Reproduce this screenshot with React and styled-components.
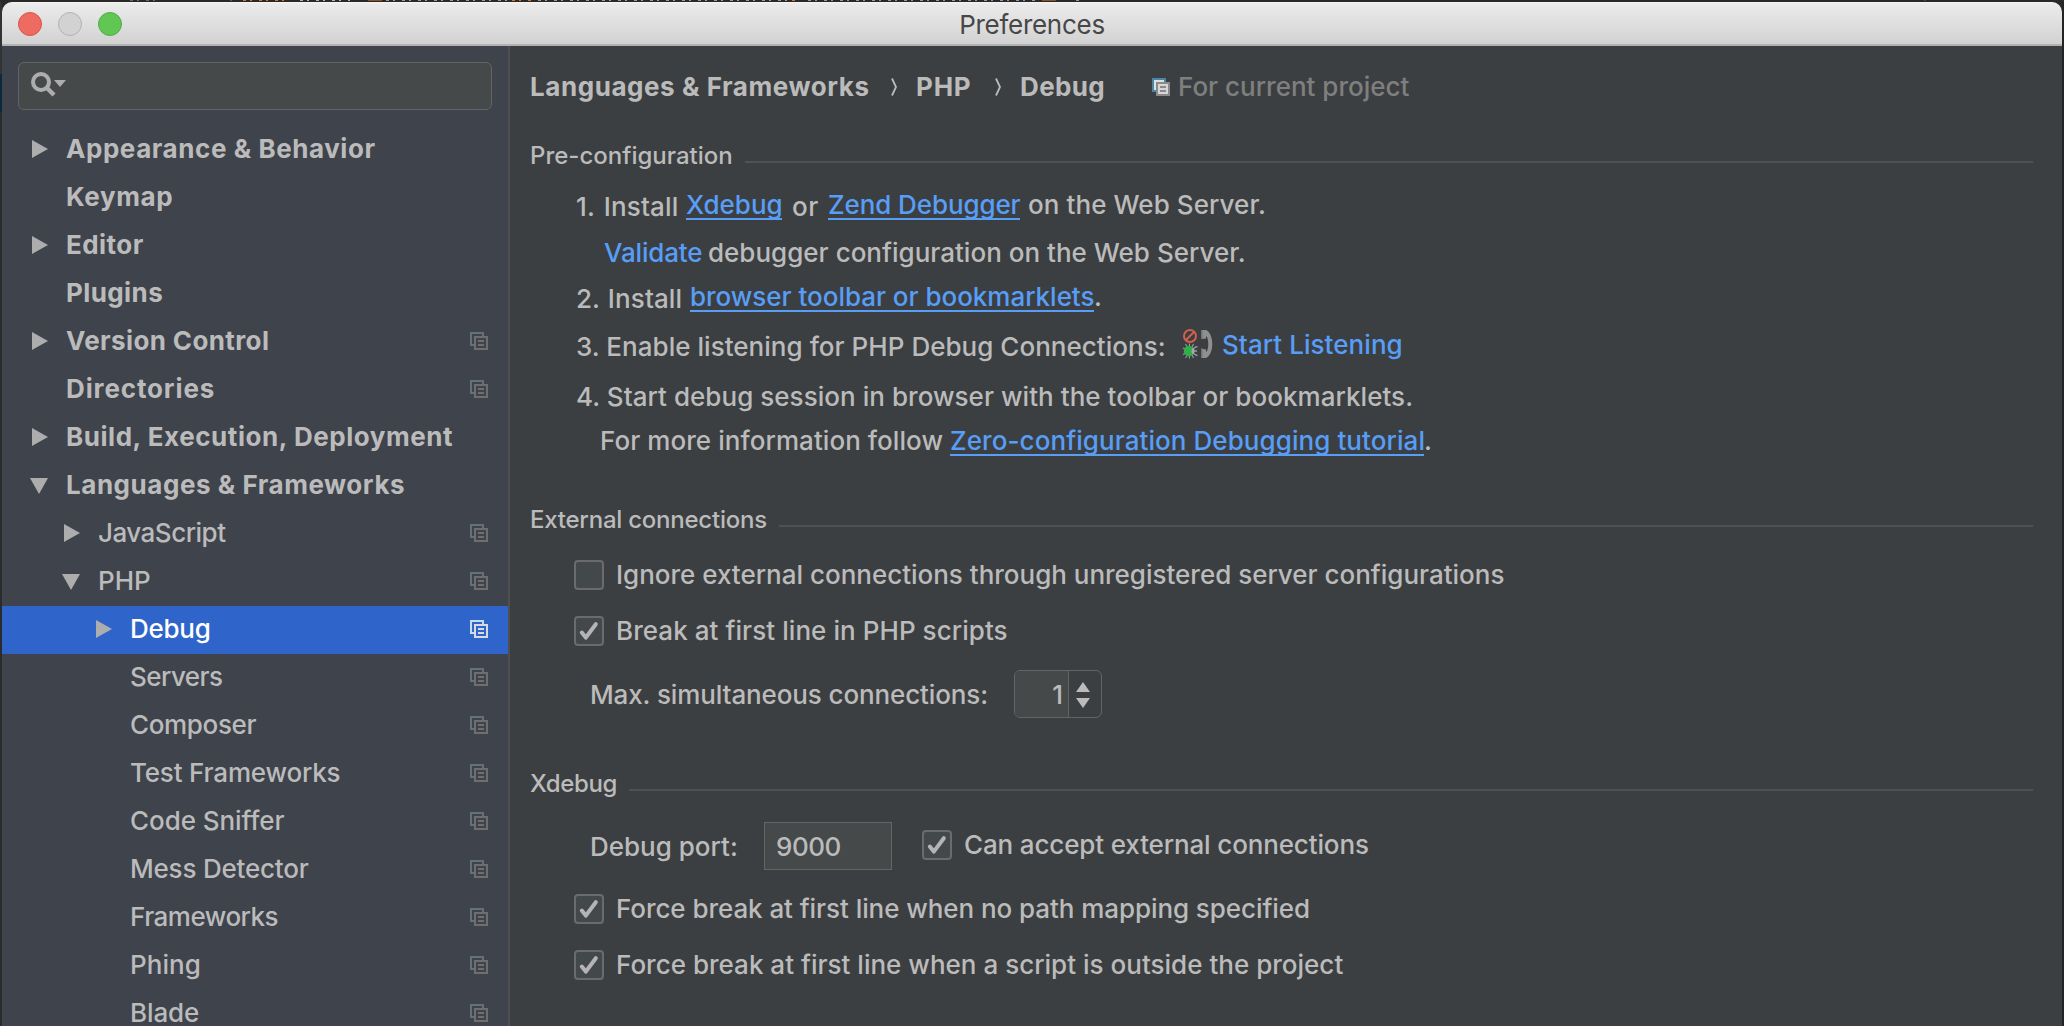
import React from "react";
import styled, { createGlobalStyle, css } from "styled-components";

const GlobalStyle = createGlobalStyle`
  html, body { margin: 0; padding: 0; background: #2b2b2b; overflow: hidden; }
  * { box-sizing: border-box; }
  body { font-family: Inter, "Liberation Sans", sans-serif; font-size: 26px; line-height: 30px; color: #bbbbbb; }
`;

const Desktop = styled.div`
  display: grid;
  grid-template-columns: 2px 2060px 2px;
  grid-template-rows: 2px 1024px;
  width: 2064px;
  height: 1026px;
  background: #282828;
`;

const EditorStrip = styled.div`
  grid-column: 1 / -1;
  display: flex;
  height: 2px;
  overflow: hidden;
  background: #2b2927;
`;

const CodeRun = styled.i`
  flex: none;
  height: 1px;
  width: ${(p) => p.$w}px;
  margin-left: ${(p) => p.$gap || 0}px;
  background: ${(p) =>
    p.$solid ? p.$c : `repeating-linear-gradient(90deg, ${p.$c} 0 3px, transparent 3px 7px, ${p.$c} 7px 9px, transparent 9px 16px)`};
`;

const EdgeLeft = styled.div`
  background: linear-gradient(#313335 0 72px, #0d293e 72px 110px, #2a2b2c 110px);
`;

const EdgeRight = styled.div`
  background: #242424;
`;

const Window = styled.div`
  display: grid;
  grid-template-rows: 44px 980px;
  grid-template-columns: 506px 2px 1552px;
  border-radius: 10px 10px 0 0;
  overflow: hidden;
`;

const TitleBar = styled.header`
  grid-column: 1 / -1;
  display: grid;
  grid-template-columns: 1fr auto 1fr;
  align-items: start;
  padding: 10px 16px 0;
  color: #474747;
  background: linear-gradient(#f6f6f6 0, #ebebeb 2px, #d2d2d2 42px, #b4b4b4 42px, #b0b0b0 44px);
`;

const Lights = styled.div`
  display: flex;
  gap: 16px;
`;

const Light = styled.span`
  width: 24px;
  height: 24px;
  border-radius: 50%;
  background: ${(p) => p.$fill};
  border: 1px solid ${(p) => p.$edge};
`;

const Text = styled.span`
  display: block;
  flex: none;
  white-space: pre;
  font-weight: ${(p) => (p.$bold ? 700 : 450)};
  letter-spacing: ${(p) => p.$ls ?? 0}px;
  ${(p) => p.$ws && css`word-spacing: ${p.$ws}px;`}
  ${(p) => p.$w && css`width: ${p.$w}px;`}
  ${(p) => p.$drop && css`margin-top: ${p.$drop}px;`}
  ${(p) => p.$gap && css`margin-left: ${p.$gap}px;`}
`;

const Title = styled(Text)`
  margin-top: -2px;
  font-weight: 400;
`;

const HintText = styled(Text)`
  color: #7f7f7f;
`;

const Sidebar = styled.aside`
  background: #3f434c;
  padding-top: 16px;
  overflow: hidden;
`;

const Divider = styled.div`
  background: #514f50;
`;

const SearchField = styled.div`
  display: flex;
  align-items: flex-start;
  height: 48px;
  margin: 0 16px 16px;
  padding: 9px 0 0 12px;
  border: 1px solid #646464;
  border-radius: 6px;
  background: #45494a;
`;

const TreeRow = styled.div`
  display: flex;
  align-items: flex-start;
  height: 48px;
  padding: 8px 20px 0 ${(p) => 28 + p.$level * 32}px;
  color: ${(p) => (p.$selected ? "#ffffff" : "#bbbbbb")};
  background: ${(p) => (p.$selected ? "#2f65ca" : "transparent")};
`;

const ArrowSlot = styled.span`
  flex: none;
  width: 36px;
  height: 30px;
`;

const Spacer = styled.span`
  flex: 1;
`;

const IconSlot = styled.span`
  flex: none;
  display: block;
  height: 18px;
  margin-top: ${(p) => p.$drop || 0}px;
  margin-left: ${(p) => p.$gap || 0}px;
`;

const Svg = styled.svg`
  display: block;
`;

const Content = styled.main`
  background: #3c3f41;
  padding: 26px 29px 0 20px;
  overflow: hidden;
`;

const Breadcrumb = styled.nav`
  display: flex;
  align-items: flex-start;
  height: 30px;
`;

const SectionHead = styled.div`
  display: flex;
  align-items: flex-start;
  height: 30px;
  margin-top: ${(p) => p.$top}px;
  font-size: 24px;
`;

const Rule = styled.span`
  flex: 1;
  height: 2px;
  margin-top: 21px;
  background: #515151;
`;

const Line = styled.div`
  display: flex;
  align-items: flex-start;
  height: ${(p) => p.$h || 30}px;
  margin-top: ${(p) => p.$top || 0}px;
  padding-left: ${(p) => p.$indent || 0}px;
`;

const Link = styled(Text)`
  color: #589df6;
  ${(p) => p.$underline && css`box-shadow: inset 0 -2px #589df6;`}
`;

const Box = styled.span`
  flex: none;
  display: block;
  width: 30px;
  height: 30px;
  margin-top: ${(p) => p.$drop || 0}px;
  margin-left: ${(p) => p.$gap || 0}px;
  border: 2px solid #6b6b6b;
  border-radius: 4px;
  background: #43494a;
`;

const PortField = styled.div`
  flex: none;
  width: 128px;
  height: 48px;
  padding: 9px 0 0 11px;
  border: 1px solid #646464;
  background: #45494a;
`;

const Spinner = styled.div`
  flex: none;
  display: grid;
  grid-template-columns: 54px 1fr;
  width: 88px;
  height: 48px;
  border: 1px solid #646464;
  border-radius: 6px;
  overflow: hidden;
`;

const SpinnerValue = styled.div`
  padding: 9px 5px 0 0;
  text-align: right;
  font-weight: 450;
  border-right: 1px solid #646464;
  background: #45494a;
`;

const SpinnerArrows = styled.div`
  padding: 11px 0 0 7px;
`;

function Arrow({ open }) {
  return (
    <Svg width="20" height="30">
      <path d={open ? "M0 8H18L9 24Z" : "M2 6V24L18 15Z"} fill="#adadad" />
    </Svg>
  );
}

function CopyIcon({ back, front, backFill = "none", frontFill }) {
  return (
    <Svg width="18" height="18" shapeRendering="crispEdges">
      <path d="M1 1H13V13H1Z" fill={backFill} stroke={back} strokeWidth="2" />
      <path d="M4 4H18V18H4Z" fill={frontFill} />
      <path d="M5 5H17V17H5Z" fill="none" stroke={front} strokeWidth="2" />
      <path d="M8 9H14M8 13H14" stroke={front} strokeWidth="2" />
    </Svg>
  );
}

function Checkbox({ checked, drop, gap }) {
  return (
    <Box $drop={drop} $gap={gap}>
      {checked && (
        <Svg width="26" height="26">
          <path d="M5.8 14.6L9.8 19.6L19.8 6.2" fill="none" stroke="#b4b4b4" strokeWidth="4" strokeLinecap="round" strokeLinejoin="round" />
        </Svg>
      )}
    </Box>
  );
}

function Chevron() {
  return (
    <Svg width="8" height="18">
      <path d="M1 0.5L5 9L1 17.5" fill="none" stroke="#bbbbbb" strokeWidth="1.8" />
    </Svg>
  );
}

function SearchIcon() {
  return (
    <Svg width="38" height="28">
      <circle cx="10" cy="10" r="8" fill="none" stroke="#adadad" strokeWidth="4" />
      <path d="M15.5 15.5L23 23" stroke="#adadad" strokeWidth="4.4" />
      <path d="M23 8H35L29 15Z" fill="#adadad" />
    </Svg>
  );
}

function ListenIcon() {
  return (
    <Svg width="32" height="32">
      <circle cx="8" cy="8" r="6" fill="none" stroke="#d0604f" strokeWidth="2" />
      <path d="M4 12L12 4" stroke="#d0604f" strokeWidth="2" />
      <path d="M3.5 16L5.5 19M7.5 15.5V18M11.5 16L10 19M3.5 30L5.5 27M7.5 30.5V28M11.5 30L10 27M1 20L3 21M1 26.5L3 25.5" stroke="#9a9a9a" strokeWidth="1.1" />
      <circle cx="7" cy="23" r="5.2" fill="#2fae4b" />
      <path d="M15.5 18.5C13 19 11 20.5 11 23C11 25.5 13 27 15.5 27.5M11.5 23H15" stroke="#9a9a9a" strokeWidth="1.3" fill="none" />
      <path d="M11 19.8C13 20.5 13 25.5 11 26.5C9 25 9 21.5 11 19.8Z" fill="#a8a8a8" />
      <path d="M19 2V11L24 10.5V8C27 9.5 27 22.5 24 24V21.5L19 20.5V30H23.5C32.500 28 32.500 4 23.500 2Z" fill="#8f8f8f" />
      <path d="M19 2H20.5V11H19ZM19 20.5H20.5V30H19Z" fill="#747474" />
    </Svg>
  );
}

const tree = [
  { t: "Appearance & Behavior", level: 0, bold: 1, arrow: "closed", ls: 0.56 },
  { t: "Keymap", level: 0, bold: 1, ls: 0.6 },
  { t: "Editor", level: 0, bold: 1, arrow: "closed", ls: 0.45 },
  { t: "Plugins", level: 0, bold: 1, ls: 0.4 },
  { t: "Version Control", level: 0, bold: 1, arrow: "closed", copy: 1, ls: 0.38 },
  { t: "Directories", level: 0, bold: 1, copy: 1, ls: 0.87 },
  { t: "Build, Execution, Deployment", level: 0, bold: 1, arrow: "closed", ls: 0.55 },
  { t: "Languages & Frameworks", level: 0, bold: 1, arrow: "open", ls: 0.54 },
  { t: "JavaScript", level: 1, arrow: "closed", copy: 1, ls: -0.5 },
  { t: "PHP", level: 1, arrow: "open", copy: 1, ls: 0 },
  { t: "Debug", level: 2, arrow: "closed", copy: 1, selected: 1, ls: -0.25 },
  { t: "Servers", level: 2, copy: 1, ls: -0.55 },
  { t: "Composer", level: 2, copy: 1, ls: -0.35 },
  { t: "Test Frameworks", level: 2, copy: 1, ls: -0.18 },
  { t: "Code Sniffer", level: 2, copy: 1, ls: -0.07 },
  { t: "Mess Detector", level: 2, copy: 1, ls: -0.2 },
  { t: "Frameworks", level: 2, copy: 1, ls: -0.5 },
  { t: "Phing", level: 2, copy: 1, ls: 0.05 },
  { t: "Blade", level: 2, copy: 1, ls: -0.1 },
];

export default function App() {
  return (
    <Desktop>
      <GlobalStyle />
      <EditorStrip>
        <CodeRun $gap={130} $w={26} $c="#6b6b6b" />
        <CodeRun $gap={74} $w={2} $c="#5a5a5a" $solid />
        <CodeRun $gap={11} $w={42} $c="#cc7832" />
        <CodeRun $gap={15} $w={50} $c="#a9b7c6" />
        <CodeRun $gap={18} $w={14} $c="#8a5526" $solid />
        <CodeRun $gap={4} $w={124} $c="#8f9ba8" />
        <CodeRun $gap={2} $w={20} $c="#cc7832" />
        <CodeRun $gap={6} $w={250} $c="#8f9ba8" />
        <CodeRun $gap={4} $w={6} $c="#cc7832" />
        <CodeRun $gap={10} $w={228} $c="#8f9ba8" />
        <CodeRun $gap={6} $w={14} $c="#8a5526" $solid />
        <CodeRun $gap={20} $w={4} $c="#8f9ba8" />
        <CodeRun $gap={844} $w={2} $c="#4a4a4a" $solid />
      </EditorStrip>
      <EdgeLeft />
      <Window>
        <TitleBar>
          <Lights>
            <Light $fill="#ed6b60" $edge="#d8554b" />
            <Light $fill="#d2d2d2" $edge="#b2b2b2" />
            <Light $fill="#62c655" $edge="#4fae43" />
          </Lights>
          <Title $ls={-0.28}>Preferences</Title>
        </TitleBar>

        <Sidebar>
          <SearchField>
            <SearchIcon />
          </SearchField>
          {tree.map((n) => (
            <TreeRow key={n.t} $level={n.level} $selected={n.selected}>
              <ArrowSlot>{n.arrow && <Arrow open={n.arrow === "open"} />}</ArrowSlot>
              <Text $bold={n.bold} $ls={n.ls}>{n.t}</Text>
              <Spacer />
              {n.copy && (
                <IconSlot $drop={6}>
                  {n.selected ? (
                    <CopyIcon back="#c3dcee" front="#d9dadd" frontFill="#2f65ca" />
                  ) : (
                    <CopyIcon back="#63717c" front="#6f6f6f" frontFill="#3f434c" />
                  )}
                </IconSlot>
              )}
            </TreeRow>
          ))}
        </Sidebar>
        <Divider />

        <Content>
          <Breadcrumb>
            <Text $bold $ls={0.56} $w={361}>Languages & Frameworks</Text>
            <IconSlot $drop={6}><Chevron /></IconSlot>
            <Text $bold $ls={0.8} $gap={17} $w={79}>PHP</Text>
            <IconSlot $drop={6}><Chevron /></IconSlot>
            <Text $bold $ls={0.35} $gap={17} $w={132}>Debug</Text>
            <IconSlot $drop={6}>
              <CopyIcon back="#4d86a3" front="#8a8a8a" backFill="#e0e0e0" frontFill="#d6d6d6" />
            </IconSlot>
            <HintText $ls={0} $gap={8}>For current project</HintText>
          </Breadcrumb>

          <SectionHead $top={38}>
            <Text $ls={0} $drop={1} $w={215}>Pre-configuration</Text>
            <Rule />
          </SectionHead>
          <Line $top={20} $h={48} $indent={46}>
            <Text $drop={2} $w={110} $ls={0.15} $ws={2}>1. Install</Text>
            <Link $underline $w={96} $ls={0}>Xdebug</Link>
            <Text $drop={2} $gap={10} $w={36} $ls={0.5}>or</Text>
            <Link $underline $w={192} $ls={-0.1}>Zend Debugger</Link>
            <Text $gap={8} $ls={0.07}>on the Web Server.</Text>
          </Line>
          <Line $h={44} $indent={74}>
            <Link $w={104} $ls={-0.15}>Validate</Link>
            <Text $ls={0.01}>debugger configuration on the Web Server.</Text>
          </Line>
          <Line $h={48} $indent={46}>
            <Text $drop={2} $w={114} $ls={0.1} $ws={1}>2. Install</Text>
            <Link $underline $w={404} $ls={-0.03}>browser toolbar or bookmarklets</Link>
            <Text>.</Text>
          </Line>
          <Line $h={52} $indent={46}>
            <Text $drop={2} $w={606} $ls={0.03}>3. Enable listening for PHP Debug Connections:</Text>
            <IconSlot $drop={-2}><ListenIcon /></IconSlot>
            <Link $gap={8} $ls={0.06}>Start Listening</Link>
          </Line>
          <Line $h={44} $indent={46}>
            <Text $ls={0.04}>4. Start debug session in browser with the toolbar or bookmarklets.</Text>
          </Line>
          <Line $indent={70}>
            <Text $w={350} $ls={0.06}>For more information follow</Text>
            <Link $underline $w={474} $ls={0.07}>Zero-configuration Debugging tutorial</Link>
            <Text>.</Text>
          </Line>

          <SectionHead $top={48}>
            <Text $ls={-0.24} $drop={1} $w={249}>External connections</Text>
            <Rule />
          </SectionHead>
          <Line $top={26} $indent={44}>
            <Checkbox />
            <Text $gap={12} $ls={-0.01}>Ignore external connections through unregistered server configurations</Text>
          </Line>
          <Line $top={26} $indent={44}>
            <Checkbox checked />
            <Text $gap={12} $ls={0.06}>Break at first line in PHP scripts</Text>
          </Line>
          <Line $top={24} $h={48} $indent={60}>
            <Text $drop={10} $w={424} $ls={-0.12}>Max. simultaneous connections:</Text>
            <Spinner>
              <SpinnerValue>1</SpinnerValue>
              <SpinnerArrows>
                <Svg width="14" height="26">
                  <path d="M0 10L7 0L14 10ZM0 16H14L7 26Z" fill="#bbbbbb" />
                </Svg>
              </SpinnerArrows>
            </Spinner>
          </Line>

          <SectionHead $top={50}>
            <Text $ls={-0.35} $drop={1} $w={99}>Xdebug</Text>
            <Rule />
          </SectionHead>
          <Line $top={24} $h={48} $indent={60}>
            <Text $drop={10} $w={174} $ls={0}>Debug port:</Text>
            <PortField>
              <Text $ls={-0.5}>9000</Text>
            </PortField>
            <Checkbox checked drop={8} gap={30} />
            <Text $drop={8} $gap={12} $ls={-0.14}>Can accept external connections</Text>
          </Line>
          <Line $top={24} $indent={44}>
            <Checkbox checked />
            <Text $gap={12} $ls={-0.07}>Force break at first line when no path mapping specified</Text>
          </Line>
          <Line $top={26} $indent={44}>
            <Checkbox checked />
            <Text $gap={12} $ls={0.01}>Force break at first line when a script is outside the project</Text>
          </Line>
        </Content>
      </Window>
      <EdgeRight />
    </Desktop>
  );
}
